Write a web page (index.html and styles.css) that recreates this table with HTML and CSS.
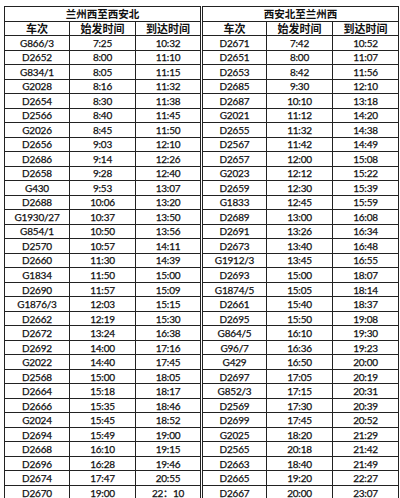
FILE: index.html
```html
<!DOCTYPE html>
<html lang="zh">
<head>
<meta charset="utf-8">
<link rel="stylesheet" href="styles.css">
</head>
<body>
<div class="page">
  <div class="side side-left">
    <div class="title">兰州西至西安北</div>
    <div class="hd">车次</div><div class="hd">始发时间</div><div class="hd">到达时间</div>
    <div>G866/3</div><div>7:25</div><div>10:32</div>
    <div>D2652</div><div>8:00</div><div>11:10</div>
    <div>G834/1</div><div>8:05</div><div>11:15</div>
    <div>G2028</div><div>8:16</div><div>11:32</div>
    <div>D2654</div><div>8:30</div><div>11:38</div>
    <div>D2566</div><div>8:40</div><div>11:45</div>
    <div>G2026</div><div>8:45</div><div>11:50</div>
    <div>D2656</div><div>9:03</div><div>12:10</div>
    <div>D2686</div><div>9:14</div><div>12:26</div>
    <div>D2658</div><div>9:28</div><div>12:40</div>
    <div>G430</div><div>9:53</div><div>13:07</div>
    <div>D2688</div><div>10:06</div><div>13:20</div>
    <div>G1930/27</div><div>10:37</div><div>13:50</div>
    <div>G854/1</div><div>10:50</div><div>13:56</div>
    <div>D2570</div><div>10:57</div><div>14:11</div>
    <div>D2660</div><div>11:30</div><div>14:39</div>
    <div>G1834</div><div>11:50</div><div>15:00</div>
    <div>D2690</div><div>11:57</div><div>15:09</div>
    <div>G1876/3</div><div>12:03</div><div>15:15</div>
    <div>D2662</div><div>12:19</div><div>15:30</div>
    <div>D2672</div><div>13:24</div><div>16:38</div>
    <div>D2692</div><div>14:00</div><div>17:16</div>
    <div>G2022</div><div>14:40</div><div>17:45</div>
    <div>D2568</div><div>15:00</div><div>18:05</div>
    <div>D2664</div><div>15:18</div><div>18:17</div>
    <div>D2666</div><div>15:35</div><div>18:46</div>
    <div>G2024</div><div>15:45</div><div>18:52</div>
    <div>D2694</div><div>15:49</div><div>19:00</div>
    <div>D2668</div><div>16:10</div><div>19:15</div>
    <div>D2696</div><div>16:28</div><div>19:46</div>
    <div>D2674</div><div>17:47</div><div>20:55</div>
    <div>D2670</div><div>19:00</div><div>22：10</div>
  </div>
  <div class="side side-right">
    <div class="title">西安北至兰州西</div>
    <div class="hd">车次</div><div class="hd">始发时间</div><div class="hd">到达时间</div>
    <div>D2671</div><div>7:42</div><div>10:52</div>
    <div>D2651</div><div>8:00</div><div>11:07</div>
    <div>D2653</div><div>8:42</div><div>11:56</div>
    <div>D2685</div><div>9:30</div><div>12:10</div>
    <div>D2687</div><div>10:10</div><div>13:18</div>
    <div>G2021</div><div>11:12</div><div>14:20</div>
    <div>D2655</div><div>11:32</div><div>14:38</div>
    <div>D2567</div><div>11:42</div><div>14:49</div>
    <div>D2657</div><div>12:00</div><div>15:08</div>
    <div>G2023</div><div>12:12</div><div>15:22</div>
    <div>D2659</div><div>12:30</div><div>15:39</div>
    <div>G1833</div><div>12:45</div><div>15:59</div>
    <div>D2689</div><div>13:00</div><div>16:08</div>
    <div>D2691</div><div>13:26</div><div>16:34</div>
    <div>D2673</div><div>13:40</div><div>16:48</div>
    <div>G1912/3</div><div>13:45</div><div>16:55</div>
    <div>D2693</div><div>15:00</div><div>18:07</div>
    <div>G1874/5</div><div>15:05</div><div>18:14</div>
    <div>D2661</div><div>15:40</div><div>18:37</div>
    <div>D2695</div><div>15:50</div><div>19:08</div>
    <div>G864/5</div><div>16:10</div><div>19:30</div>
    <div>G96/7</div><div>16:36</div><div>19:23</div>
    <div>G429</div><div>16:50</div><div>20:00</div>
    <div>D2697</div><div>17:05</div><div>20:19</div>
    <div>G852/3</div><div>17:15</div><div>20:31</div>
    <div>D2569</div><div>17:30</div><div>20:39</div>
    <div>D2699</div><div>17:45</div><div>20:52</div>
    <div>G2025</div><div>18:20</div><div>21:29</div>
    <div>D2565</div><div>20:18</div><div>21:42</div>
    <div>D2663</div><div>18:40</div><div>21:49</div>
    <div>D2665</div><div>19:20</div><div>22:27</div>
    <div>D2667</div><div>20:00</div><div>23:07</div>
  </div>
</div>
</body>
</html>
```

FILE: styles.css
```css
html, body {
  margin: 0;
  padding: 0;
  background: #fff;
}
body {
  width: 400px;
  height: 498px;
  overflow: hidden;
}
.page {
  display: flex;
  gap: 1px;
  padding: 6px 0 0 4px;
}
.side {
  display: grid;
  gap: 1px;
  background: #222;
  border: 1px solid #222;
  grid-template-rows: 14px 13px;
  grid-auto-rows: 13.52px;
  font-family: Lato, "Noto Sans CJK SC", sans-serif;
  font-size: 10px;
  letter-spacing: -0.2px;
  color: #111;
  -webkit-text-stroke: 0.25px #111;
}
.side-left {
  grid-template-columns: 64px 65px 64px;
}
.side-right {
  grid-template-columns: 63px 65px 65px;
}
.side > div {
  background: #fff;
  display: flex;
  align-items: center;
  justify-content: center;
  white-space: nowrap;
  line-height: 1;
}
.side > .title {
  grid-column: 1 / 4;
  font-family: "Noto Sans CJK SC", sans-serif;
  font-weight: 700;
  font-size: 10.5px;
  letter-spacing: 0;
  -webkit-text-stroke: 0;
}
.side > .hd {
  font-family: "Noto Sans CJK SC", sans-serif;
  font-weight: 700;
  font-size: 11px;
  letter-spacing: 0;
  -webkit-text-stroke: 0;
}
```
